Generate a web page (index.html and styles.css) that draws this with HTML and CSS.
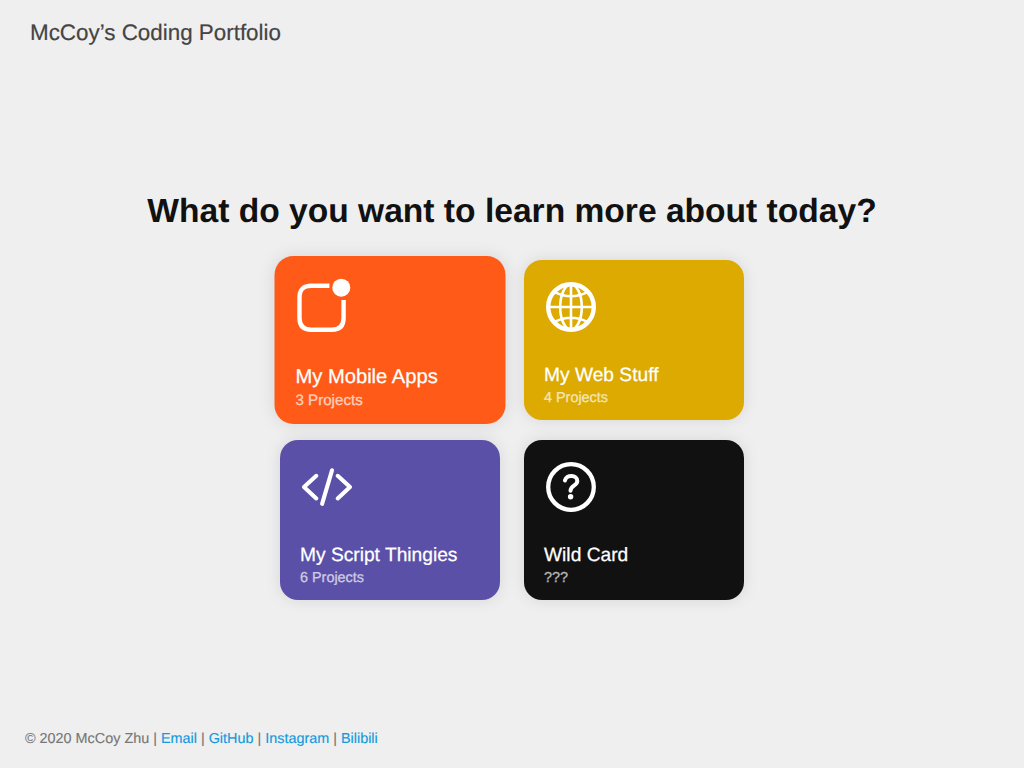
FILE: index.html
```html
<!DOCTYPE html>
<html lang="en">
<head>
<meta charset="utf-8">
<title>McCoy’s Coding Portfolio</title>
<link rel="stylesheet" href="styles.css">
</head>
<body>
<header class="header">McCoy’s Coding Portfolio</header>
<main class="main">
  <h1 class="title">What do you want to learn more about today?</h1>
  <div class="cards">
    <a class="card card-mobile card-active">
      <svg class="icon" viewBox="0 0 54 54" fill="none" stroke="#fff" stroke-width="4.2" stroke-linecap="butt"><path d="M32.300 8.400H15Q3.800 8.400 3.800 19.600V39Q3.800 50.200 15 50.200H34.600Q45.800 50.200 45.800 39V21.900"/><circle cx="43.600" cy="10.200" r="8.600" fill="#fff" stroke="none"/></svg>
      <h2 class="name">My Mobile Apps</h2>
      <p class="count">3 Projects</p>
    </a>
    <a class="card card-web">
      <svg class="icon" viewBox="0 0 54 54" fill="none" stroke="#fff" stroke-width="2.600"><circle cx="27" cy="27" r="22.800" stroke-width="4.400"/><ellipse cx="27" cy="27" rx="10.800" ry="22.500"/><path d="M27 4V50M4 27H50M10.500 12.200Q27 20.400 43.500 12.200M10.500 41.800Q27 33.600 43.500 41.800"/></svg>
      <h2 class="name">My Web Stuff</h2>
      <p class="count">4 Projects</p>
    </a>
    <a class="card card-script">
      <svg class="icon" viewBox="0 0 54 54" fill="none" stroke="#fff" stroke-width="4.100" stroke-linecap="round" stroke-linejoin="round"><path d="M16.300 15.800L4 27L16.300 38.400M37.700 15.800L50 27L37.700 38.400M32 10.300L22.100 43.800"/></svg>
      <h2 class="name">My Script Thingies</h2>
      <p class="count">6 Projects</p>
    </a>
    <a class="card card-wild">
      <svg class="icon" viewBox="0 0 54 54" fill="none" stroke="#fff" stroke-width="4" stroke-linecap="round"><circle cx="27" cy="27" r="22.800" stroke-width="4.300"/><path d="M20.900 20.500C22.200 14.200 33.300 14.700 33.300 21C33.300 25.800 26.500 25.600 26.500 30.700"/><circle cx="26.600" cy="36.700" r="2.700" fill="#fff" stroke="none"/></svg>
      <h2 class="name">Wild Card</h2>
      <p class="count">???</p>
    </a>
  </div>
</main>
<footer class="footer">© 2020 McCoy Zhu | <a class="link">Email</a> | <a class="link">GitHub</a> | <a class="link">Instagram</a> | <a class="link">Bilibili</a></footer>
</body>
</html>
```
FILE: styles.css
```css
* { box-sizing: border-box; }
body { margin: 0; height: 768px; overflow: hidden; display: flex; flex-direction: column; background: #efefef; font-family: "Liberation Sans", Arial, sans-serif; text-rendering: geometricPrecision; }
.header { height: 64px; padding-left: 30px; font-size: 22.4px; line-height: 65px; color: #444; -webkit-text-stroke: .2px; }
.main { flex: 1; display: flex; flex-direction: column; align-items: center; padding-top: 126px; }
.title { margin: 0; height: 70px; font-size: 33.6px; line-height: 43px; color: #111; white-space: nowrap; }
.cards { display: grid; grid-template-columns: 220px 220px; grid-auto-rows: 160px; gap: 20px 24px; }
.card { display: flex; flex-direction: column; padding: 20px; border-radius: 18px; color: #fff; box-shadow: 0 0 16px rgba(0,0,0,.1); }
.card-active { transform: scale(1.05); }
.card-mobile { background: #ff5a17; }
.card-web { background: #dcaa00; }
.card-script { background: #5b50a8; }
.card-wild { background: #111; }
.icon { width: 54px; height: 54px; overflow: visible; }
.name { margin: 30px 0 0; font-size: 19.2px; line-height: 24px; font-weight: 400; white-space: nowrap; -webkit-text-stroke: .25px; }
.count { margin: 2px 0 0; font-size: 14.4px; line-height: 16px; opacity: .7; -webkit-text-stroke: .25px; }
.footer { height: 60px; padding-left: 25px; font-size: 14.4px; line-height: 62px; color: #777; -webkit-text-stroke: .15px; }
.link { color: #139add; }
```
